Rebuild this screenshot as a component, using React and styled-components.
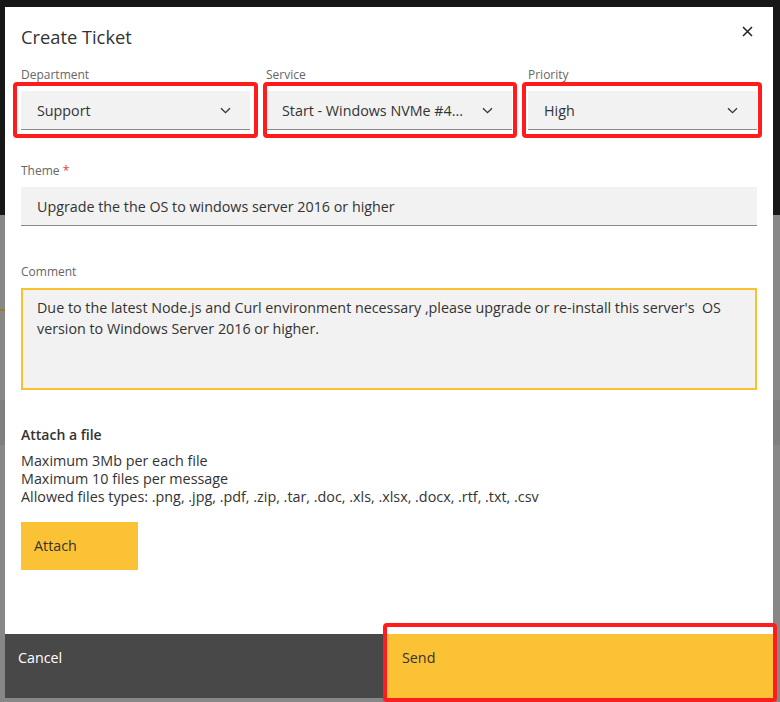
import React from 'react';
import styled, { createGlobalStyle } from 'styled-components';

const GlobalStyle = createGlobalStyle`
  html, body {
    margin: 0;
    padding: 0;
    background: #878787;
    font-family: "Open Sans", "Noto Sans", Arial, sans-serif;
  }
  * { box-sizing: border-box; }
`;

const Backdrop = styled.div`
  min-height: 702px;
  padding: 7px 7px 0 5px;
  background: linear-gradient(#171717 0 215px, #878787 215px 400px, #7f7f7f 400px 445px, #878787 445px);
  position: relative;
  overflow: hidden;
`;

const PageEdge = styled.div`
  position: absolute;
  left: 0;
  top: 309px;
  width: 5px;
  height: 2px;
  background: #a07a2a;
`;

const Modal = styled.div`
  width: 768px;
  height: 691px;
  background: #fff;
  display: flex;
  flex-direction: column;
  position: relative;
`;

const Header = styled.div`
  display: flex;
  align-items: center;
  justify-content: space-between;
  padding: 18px 20px 0 16px;
  height: 42px;
`;

const Title = styled.h2`
  margin: 0;
  font-size: 18.3px;
  font-weight: 400;
  line-height: 24px;
  color: #333;
`;

const CloseButton = styled.button`
  width: 12px;
  height: 12px;
  padding: 0;
  border: 0;
  background: none;
  display: flex;
  align-items: center;
  justify-content: center;
  cursor: pointer;
  margin-top: -12px;
`;

const Body = styled.div`
  padding: 18px 16px 0 16px;
  display: flex;
  flex-direction: column;
`;

const SelectRow = styled.div`
  display: grid;
  grid-template-columns: 229px 246px 229px;
  column-gap: 16px;
`;

const Field = styled.div`
  display: flex;
  flex-direction: column;
  margin-top: ${({ $gap }) => $gap || 0}px;
`;

const Label = styled.label`
  font-size: 12px;
  line-height: 16px;
  color: #666;
  margin-bottom: 8px;
`;

const Required = styled.span`
  color: #e53935;
`;

const SelectWrap = styled.div`
  position: relative;
`;

const Select = styled.div`
  height: 39px;
  background: #f2f2f2;
  border-bottom: 1px solid #8a8a8a;
  display: flex;
  align-items: center;
  justify-content: space-between;
  padding: 0 19px 0 16px;
  font-size: 14.3px;
  color: #333;
`;

const SelectText = styled.span`
  white-space: nowrap;
  overflow: hidden;
  margin-right: 12px;
`;

const Highlight = styled.div`
  position: absolute;
  top: -9px;
  bottom: -8px;
  left: ${({ $l }) => $l}px;
  right: ${({ $r }) => $r}px;
  border: 4px solid #ff1c1c;
  border-radius: 4px;
  pointer-events: none;
`;

const Input = styled.div`
  height: 39px;
  background: #f2f2f2;
  border-bottom: 1px solid #8a8a8a;
  display: flex;
  align-items: center;
  padding: 0 16px;
  font-size: 14.3px;
  color: #333;
`;

const TextArea = styled.textarea`
  height: 102px;
  width: 100%;
  resize: none;
  background: #f2f2f2;
  border: 2px solid #fbc02d;
  padding: 7px 14px;
  font-family: inherit;
  font-size: 14.3px;
  line-height: 21px;
  color: #333;
  outline: none;
  white-space: pre-wrap;
`;

const AttachTitle = styled.div`
  margin-top: 35px;
  font-size: 14px;
  font-weight: 600;
  line-height: 20px;
  color: #333;
`;

const AttachInfo = styled.div`
  margin-top: 7px;
  font-size: 14.35px;
  line-height: 18px;
  color: #333;
`;

const AttachButton = styled.button`
  margin-top: 16px;
  width: 117px;
  height: 48px;
  border: 0;
  background: #fcc236;
  text-align: left;
  padding: 0 0 2px 13px;
  font-family: inherit;
  font-size: 14.3px;
  color: #333;
`;

const Footer = styled.div`
  margin-top: auto;
  height: 64px;
  display: grid;
  grid-template-columns: 381px 1fr;
`;

const FooterButton = styled.button`
  border: 0;
  height: 64px;
  display: flex;
  align-items: flex-start;
  font-family: inherit;
  font-size: 14.3px;
  line-height: 20px;
  padding: 14px 0 0 ${({ $primary }) => ($primary ? 16 : 13)}px;
  background: ${({ $primary }) => ($primary ? '#fcc236' : '#484848')};
  color: ${({ $primary }) => ($primary ? '#333' : '#fff')};
  position: relative;
`;

const SendHighlight = styled.div`
  position: absolute;
  top: -11px;
  left: -3px;
  right: -4px;
  bottom: -4px;
  border: 4px solid #ff1c1c;
  border-radius: 4px;
  pointer-events: none;
`;

const Chevron = () => (
  <svg width="11" height="7" viewBox="0 0 11 7" fill="none">
    <path d="M1 1.2l4.5 4.5 4.5-4.5" stroke="#333" strokeWidth="1.3" />
  </svg>
);

const CloseIcon = () => (
  <svg width="11" height="11" viewBox="0 0 11 11" fill="none">
    <path d="M1 1l9 9M10 1l-9 9" stroke="#222" strokeWidth="1.5" />
  </svg>
);

const selects = [
  { label: 'Department', value: 'Support', l: -8, r: -8 },
  { label: 'Service', value: 'Start - Windows NVMe #4...', l: -3, r: -5 },
  { label: 'Priority', value: 'High', l: -6, r: -5 },
];

export default function App() {
  return (
    <>
      <GlobalStyle />
      <Backdrop>
        <PageEdge />
        <Modal>
          <Header>
            <Title>Create Ticket</Title>
            <CloseButton aria-label="Close">
              <CloseIcon />
            </CloseButton>
          </Header>

          <Body>
            <SelectRow>
              {selects.map((s) => (
                <Field key={s.label}>
                  <Label>{s.label}</Label>
                  <SelectWrap>
                    <Select>
                      <SelectText>{s.value}</SelectText>
                      <Chevron />
                    </Select>
                    <Highlight $l={s.l} $r={s.r} />
                  </SelectWrap>
                </Field>
              ))}
            </SelectRow>

            <Field $gap={33}>
              <Label>
                Theme <Required>*</Required>
              </Label>
              <Input>Upgrade the the OS to windows server 2016 or higher</Input>
            </Field>

            <Field $gap={38}>
              <Label>Comment</Label>
              <TextArea
                readOnly
                value={
                  "Due to the latest Node.js and Curl environment necessary ,please upgrade or re-install this server's  OS\nversion to Windows Server 2016 or higher."
                }
              />
            </Field>

            <AttachTitle>Attach a file</AttachTitle>
            <AttachInfo>
              Maximum 3Mb per each file
              <br />
              Maximum 10 files per message
              <br />
              Allowed files types: .png, .jpg, .pdf, .zip, .tar, .doc, .xls, .xlsx, .docx, .rtf, .txt, .csv
            </AttachInfo>
            <div>
              <AttachButton>Attach</AttachButton>
            </div>
          </Body>

          <Footer>
            <FooterButton>Cancel</FooterButton>
            <FooterButton $primary>
              Send
              <SendHighlight />
            </FooterButton>
          </Footer>
        </Modal>
      </Backdrop>
    </>
  );
}
